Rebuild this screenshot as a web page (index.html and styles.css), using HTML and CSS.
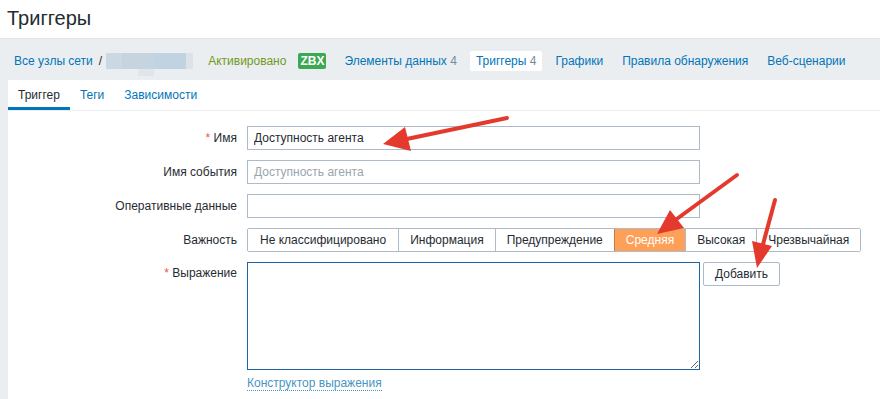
FILE: index.html
```html
<!DOCTYPE html>
<html lang="ru">
<head>
  <meta charset="UTF-8">
  <link rel="stylesheet" href="styles.css">
  <title>Триггеры</title>
</head>
<body>

  <header class="page-header">
    <h1>Триггеры</h1>
  </header>

  <nav class="host-nav">
    <a href="#" class="crumb">Все узлы сети</a>
    <span class="sep">/</span>
    <span class="blur"><span class="blur-tail"></span></span>
    <span class="status">Активировано</span>
    <span class="badge">ZBX</span>
    <a href="#" class="nav-item">Элементы данных <span class="count">4</span></a>
    <a href="#" class="nav-item nav-active">Триггеры <span class="count">4</span></a>
    <a href="#" class="nav-item">Графики</a>
    <a href="#" class="nav-item">Правила обнаружения</a>
    <a href="#" class="nav-item">Веб-сценарии</a>
  </nav>

  <div class="panel">
    <div class="tabs">
      <a href="#" class="tab tab-active">Триггер</a>
      <a href="#" class="tab">Теги</a>
      <a href="#" class="tab">Зависимости</a>
    </div>

    <form class="form">
      <label class="form-label"><span class="req">*</span> Имя</label>
      <div class="form-field">
        <input class="text-input" type="text" value="Доступность агента">
      </div>

      <label class="form-label">Имя события</label>
      <div class="form-field">
        <input class="text-input" type="text" placeholder="Доступность агента">
      </div>

      <label class="form-label">Оперативные данные</label>
      <div class="form-field">
        <input class="text-input" type="text">
      </div>

      <label class="form-label">Важность</label>
      <div class="form-field">
        <div class="severity">
          <span class="sev">Не классифицировано</span>
          <span class="sev">Информация</span>
          <span class="sev">Предупреждение</span>
          <span class="sev sev-selected">Средняя</span>
          <span class="sev">Высокая</span>
          <span class="sev">Чрезвычайная</span>
        </div>
      </div>

      <label class="form-label label-top"><span class="req">*</span> Выражение</label>
      <div class="form-field">
        <div class="expr-row">
          <textarea class="expr"></textarea>
          <button type="button" class="btn">Добавить</button>
        </div>
        <a href="#" class="dotted-link">Конструктор выражения</a>
      </div>
    </form>
  </div>

  <!-- стрелки поверх скриншота -->
  <svg class="arrows" width="880" height="399" viewBox="0 0 880 399">
    <g stroke="#e43a2d" stroke-width="4" stroke-linecap="round" fill="none">
      <line x1="507" y1="118" x2="402" y2="140"/>
      <line x1="737" y1="175" x2="674" y2="221"/>
      <line x1="775" y1="200" x2="762" y2="248"/>
    </g>
    <g fill="#e43a2d">
      <polygon points="383,144 405,127 411,151"/>
      <polygon points="657,234 670,210 684,228"/>
      <polygon points="757,268 752,241 772,246"/>
    </g>
  </svg>

</body>
</html>
```

FILE: styles.css
```css
body {
  margin: 0;
  font-family: "Liberation Sans", Arial, sans-serif;
  font-size: 12px;
  color: #1f2c33;
  background: #ebeef0;
  position: relative;
  height: 399px;
  overflow: hidden;
}

a {
  text-decoration: none;
  color: #0275b8;
}

.page-header {
  background: #fff;
  height: 38px;
  border-bottom: 1px solid #dfe4e7;
}

.page-header h1 {
  margin: 0;
  padding: 6px 0 0 7px;
  font-size: 20px;
  font-weight: normal;
  line-height: 24px;
  color: #1f2c33;
}

.host-nav {
  display: flex;
  align-items: center;
  height: 38px;
  padding-top: 3px;
  padding-left: 14px;
}

.sep {
  margin: 0 4px 0 6px;
  color: #1f2c33;
}

.blur {
  position: relative;
  width: 87px;
  height: 16px;
  background: linear-gradient(to right, #cbd7e1 0, #cbd7e1 16px, #c6d4df 16px, #c6d4df 48px, #bfd3e1 48px, #bfd3e1 80px, #dbe2e8 80px);
  margin-right: 15px;
}

.blur-tail {
  position: absolute;
  left: 32px;
  top: 16px;
  width: 16px;
  height: 7px;
  background: #dfe5ea;
}

.status {
  color: #6f9a1e;
  margin-right: 12px;
}

.badge {
  background: #3ca851;
  color: #fff;
  font-weight: bold;
  font-size: 12px;
  line-height: 16px;
  padding: 0 2px;
  border-radius: 2px;
  margin-right: 18px;
}

.nav-item {
  margin-right: 19px;
  line-height: 20px;
}

.nav-active {
  background: #fff;
  padding: 0 6px;
  margin-left: -6px;
  margin-right: 13px;
  border-radius: 2px;
}

.count {
  color: #768d99;
}

.panel {
  background: #fff;
  margin-left: 8px;
  height: 319px;
}

.tabs {
  display: flex;
  height: 30px;
  border-bottom: 1px solid #ebeef0;
}

.tab {
  padding: 8px 10px 0;
  line-height: 14px;
}

.tab-active {
  color: #1f2c33;
  border-bottom: 3px solid #0275b8;
}

.form {
  display: grid;
  grid-template-columns: 229px 1fr;
  column-gap: 10px;
  row-gap: 10px;
  padding-top: 15px;
}

.form-label {
  text-align: right;
  line-height: 24px;
  color: #1f2c33;
}

.label-top {
  line-height: 22px;
}

.req {
  color: #e45959;
}

.text-input {
  box-sizing: border-box;
  width: 453px;
  height: 24px;
  margin: 0;
  padding: 0 6px;
  border: 1px solid #acbbc7;
  font-family: inherit;
  font-size: 12px;
  color: #1f2c33;
}

.text-input::placeholder {
  color: #9aa6ae;
}

.severity {
  display: inline-flex;
  border: 1px solid #acbbc7;
  border-radius: 2px;
  height: 22px;
}

.sev {
  line-height: 22px;
  padding: 0 11px;
  border-left: 1px solid #acbbc7;
  background: #fff;
}

.sev:first-child {
  border-left: none;
  padding: 0 12px;
}

.sev-selected {
  background: #ffa059;
  color: #fff;
  border-left-color: #c97d45;
  border-right: 1px solid #c97d45;
  margin-right: -1px;
}

.expr-row {
  display: flex;
  align-items: flex-start;
}

.expr {
  box-sizing: border-box;
  width: 453px;
  height: 108px;
  margin: 0;
  border: 1px solid #1f65a6;
  resize: vertical;
  font-family: inherit;
}

.btn {
  margin-left: 3px;
  height: 24px;
  width: 77px;
  background: #fff;
  border: 1px solid #acbbc7;
  border-radius: 2px;
  font-family: inherit;
  font-size: 12px;
  color: #1f2c33;
  padding: 0;
}

.dotted-link {
  display: inline-block;
  margin-top: 6px;
  color: #4796c4;
  border-bottom: 1px dotted #4796c4;
  line-height: 14px;
}

.arrows {
  position: absolute;
  left: 0;
  top: 0;
  pointer-events: none;
}
```
